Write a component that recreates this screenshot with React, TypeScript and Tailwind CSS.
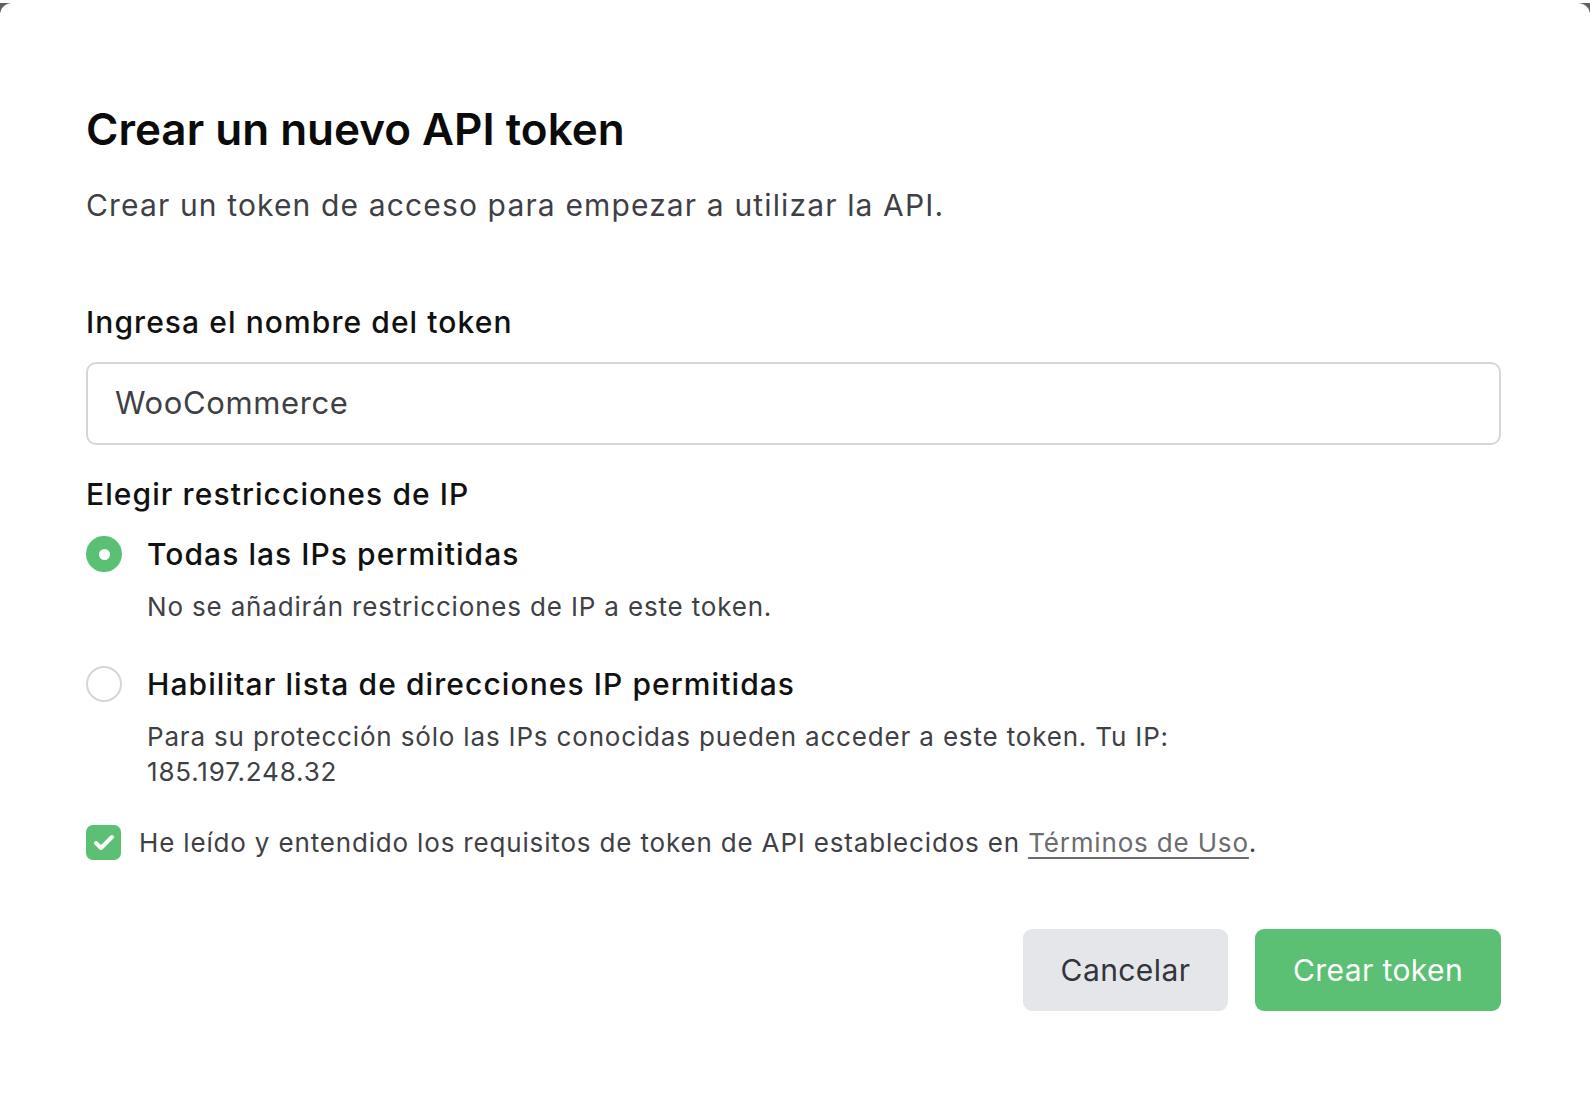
import { Check } from 'lucide-react'

export default function App() {
  return (
    <div className="min-h-screen bg-[#616161] font-['Inter',sans-serif]">
      <div className="mt-[3px] h-[1091px] rounded-t-[12px] bg-white pl-[86px] pr-[89px] pt-[100px]">
        <h1 className="text-[44px] font-semibold leading-[52px] text-[#0b0b0b]">
          Crear un nuevo API token
        </h1>
        <p className="mt-[30px] text-[30px] leading-[40px] tracking-[0.038em] text-[#3f3f46]">
          Crear un token de acceso para empezar a utilizar la API.
        </p>

        <label className="mt-[79px] block text-[30px] font-medium leading-[36px] tracking-[0.036em] text-[#111111]">
          Ingresa el nombre del token
        </label>
        <div className="mt-[22px] flex h-[83px] items-center rounded-[10px] border-2 border-[#d6d6da] pl-[27px] text-[31px] tracking-[0.02em] text-[#3f3f46]">
          WooCommerce
        </div>

        <div className="mt-[31px] text-[30px] font-medium leading-[36px] tracking-[0.036em] text-[#111111]">
          Elegir restricciones de IP
        </div>

        <div className="mt-[24px]">
          <div className="flex items-center gap-[25px]">
            <span className="flex h-[36px] w-[36px] items-center justify-center rounded-full bg-[#5bbf74]">
              <span className="h-[11px] w-[11px] rounded-full bg-white" />
            </span>
            <span className="text-[30px] font-medium leading-[36px] tracking-[0.035em] text-[#111111]">
              Todas las IPs permitidas
            </span>
          </div>
          <p className="mt-[17px] pl-[61px] text-[26px] leading-[35px] tracking-[0.032em] text-[#3f3f46]">
            No se añadirán restricciones de IP a este token.
          </p>
        </div>

        <div className="mt-[42px]">
          <div className="flex items-center gap-[25px]">
            <span className="h-[36px] w-[36px] rounded-full border-2 border-[#d6d6da] bg-white" />
            <span className="text-[30px] font-medium leading-[36px] tracking-[0.036em] text-[#111111]">
              Habilitar lista de direcciones IP permitidas
            </span>
          </div>
          <p className="mt-[17px] pl-[61px] text-[26px] leading-[35px] tracking-[0.032em] text-[#3f3f46]">
            Para su protección sólo las IPs conocidas pueden acceder a este token. Tu IP:
            <br />
            185.197.248.32
          </p>
        </div>

        <div className="mt-[36px] flex items-center gap-[18px]">
          <span className="flex h-[35px] w-[35px] items-center justify-center rounded-[7px] bg-[#5bbf74]">
            <Check className="h-[24px] w-[24px] text-white" strokeWidth={4} />
          </span>
          <span className="text-[26px] leading-[35px] tracking-[0.032em] text-[#3f3f46]">
            He leído y entendido los requisitos de token de API establecidos en{' '}
            <a className="text-[#6b6b70] underline decoration-[2px] underline-offset-[5px]">
              Términos de Uso
            </a>
            .
          </span>
        </div>

        <div className="mt-[69px] flex justify-end gap-[27px]">
          <button className="h-[82px] w-[205px] rounded-[9px] bg-[#e5e6ea] text-[30px] tracking-[0.014em] text-[#34343a]">
            Cancelar
          </button>
          <button className="h-[82px] w-[246px] rounded-[9px] bg-[#5bbf74] text-[30px] tracking-[0.014em] text-white">
            Crear token
          </button>
        </div>
      </div>
    </div>
  )
}
